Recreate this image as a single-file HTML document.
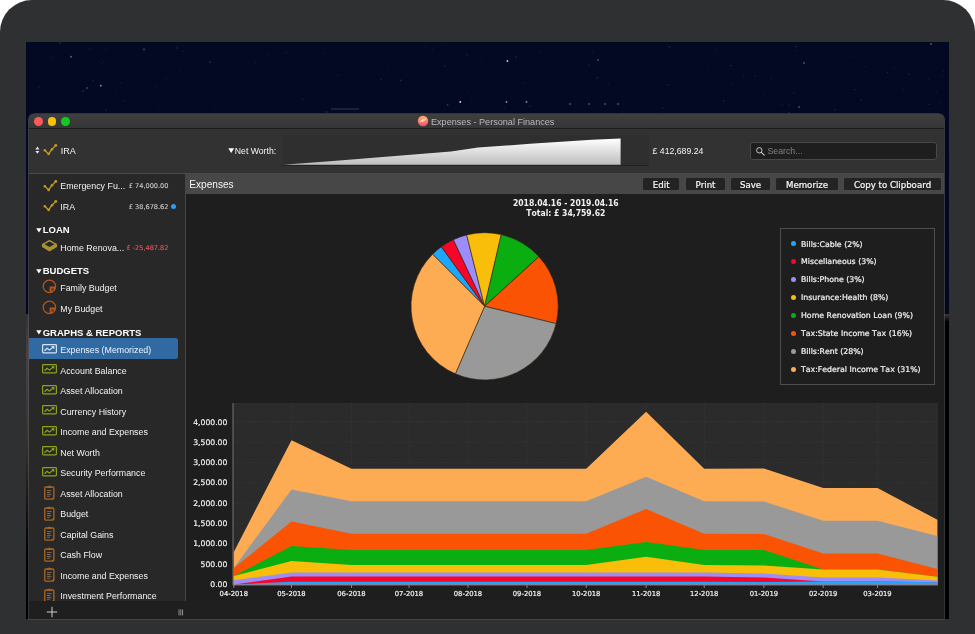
<!DOCTYPE html>
<html><head><meta charset="utf-8"><title>Expenses - Personal Finances</title>
<style>
html,body{margin:0;padding:0;background:#fff;}
body{width:975px;height:634px;position:relative;overflow:hidden;font-family:"Liberation Sans",sans-serif;}
.abs,.ic,.row,.amt,.dot,.tri,.head,.selbg,.ldot,.ltxt,.yl,.xl,.btn{position:absolute;}
#bezel{left:0;top:0;width:975px;height:660px;background:#2f3032;border-radius:32px 32px 0 0;}
#screen{left:26px;top:42px;width:923px;height:577px;background:#000;overflow:hidden;}
#wall{left:0;top:0;width:923px;height:272px;background:linear-gradient(#040923,#03071f);}
#wallL{left:0;top:272px;width:4px;height:305px;background:linear-gradient(#34313a 0,#4a4044 40px,#3a2e30 130px,#0a0808 220px,#000 260px);}
#wallR{left:918px;top:272px;width:5px;height:305px;background:linear-gradient(#3c3840 0,#000 8px);}
#win{left:29px;top:113.6px;width:915.4px;height:505px;background:#1e1e1e;border-radius:5px 5px 0 0;overflow:hidden;box-shadow:0 0 0 0.6px #5a5a5a;}
#title{left:0;top:0;width:100%;height:14.6px;background:linear-gradient(#3f3f3f,#363636);border-bottom:0.8px solid #1c1c1c;}
#tbar{left:0;top:15.2px;width:100%;height:44.6px;background:#323232;border-bottom:0.8px solid #4a4a4a;}
.tl{position:absolute;top:3.3px;width:8.8px;height:8.8px;border-radius:50%;}
#ttxt{left:431px;top:116.8px;font-size:9.1px;color:#b9b9b9;white-space:nowrap;line-height:11px;}
#side{left:29px;top:174px;width:156.4px;height:427px;background:#282828;border-right:0.8px solid #454545;}
#sfoot{left:29px;top:601px;width:915.4px;height:17.7px;background:#1f1f1f;}
.row{left:60.3px;font-size:8.85px;line-height:14px;color:#f2f2f2;white-space:nowrap;}
.row.sel{color:#eaf3ff;}
.amt{right:806.6px;font-family:"DejaVu Sans",sans-serif;font-kerning:none;font-size:6.55px;line-height:13px;white-space:nowrap;}
.dot{left:171px;width:5.2px;height:5.2px;border-radius:50%;background:#2e9bf2;}
.tri{left:36px;width:0;height:0;border-left:2.5px solid transparent;border-right:2.5px solid transparent;border-top:4.6px solid #fff;}
.head{left:42.7px;font-size:9.5px;font-weight:bold;line-height:14px;color:#fff;white-space:nowrap;}
.selbg{left:29px;top:338.2px;width:148.8px;height:20.5px;background:#316aa3;border-radius:0 2.5px 2.5px 0;}
#hbar{left:186.2px;top:174px;width:758.2px;height:20px;background:#474747;}
#hname{left:189.2px;top:178px;font-size:10.15px;line-height:14px;color:#f4f4f4;}
.btn{-webkit-text-stroke:0.22px #f5f5f5;top:177.7px;height:12.4px;background:#232323;border-radius:1.5px;color:#f5f5f5;font-family:"DejaVu Sans",sans-serif;font-kerning:none;font-size:8.6px;line-height:14.6px;text-align:center;white-space:nowrap;}
.ptitle{position:absolute;left:465.8px;width:200px;text-align:center;font-family:"DejaVu Sans Condensed","DejaVu Sans",sans-serif;font-kerning:none;font-weight:bold;font-size:8.55px;line-height:10px;color:#f0f0f0;white-space:nowrap;}
#legend{left:779.6px;top:228.2px;width:153.4px;height:154.4px;border:0.8px solid #4e4e4e;}
.ldot{left:790.8px;width:5.2px;height:5.2px;border-radius:50%;}
.ltxt{-webkit-text-stroke:0.22px #f0f0f0;left:801px;font-family:"DejaVu Sans",sans-serif;font-kerning:none;font-size:7.8px;line-height:12px;color:#f0f0f0;white-space:nowrap;}
#plot{left:233px;top:403px;width:705px;height:182px;background:#2b2b2b;}
.yl{-webkit-text-stroke:0.2px #f0f0f0;left:178.4px;width:49px;text-align:right;font-family:"DejaVu Sans",sans-serif;font-kerning:none;font-size:7.7px;line-height:11px;color:#f0f0f0;white-space:nowrap;}
.xl{-webkit-text-stroke:0.2px #f0f0f0;top:588.9px;width:50px;text-align:center;font-family:"DejaVu Sans",sans-serif;font-kerning:none;font-size:6.8px;line-height:11px;color:#f0f0f0;white-space:nowrap;}
#nw{left:227px;top:146px;font-size:8.7px;line-height:11px;color:#f4f4f4;white-space:nowrap;}
#nwbox{left:283px;top:135.4px;width:366px;height:29.4px;background:#2f2f2f;border-bottom:0.9px solid #222;}
#nwamt{left:652.6px;top:145.9px;font-size:8.7px;line-height:11px;color:#f4f4f4;white-space:nowrap;}
#search{left:749.8px;top:141.8px;width:187px;height:18.4px;background:#1e1e1e;border:0.8px solid #484848;border-radius:3px;box-sizing:border-box;}
#stxt{left:767.4px;top:146px;font-size:8.8px;line-height:11px;color:#808080;}
#ira{left:60.8px;top:144.8px;font-size:9px;line-height:12px;color:#f4f4f4;}
</style></head><body><div id="root" style="position:absolute;left:0;top:0;width:975px;height:634px;will-change:transform">
<div id="bezel" class="abs"></div>
<div id="screen" class="abs"><div id="wall" class="abs"></div><div id="wallL" class="abs"></div><div id="wallR" class="abs"></div></div>
<svg class="abs" style="left:0;top:0" width="975" height="634" viewBox="0 0 975 634">
<circle cx="324.9" cy="52.9" r="0.5" fill="#aab4d8" opacity="0.22"/>
<circle cx="92.9" cy="80.6" r="1.0" fill="#aab4d8" opacity="0.1"/>
<circle cx="79.5" cy="78.5" r="0.5" fill="#aab4d8" opacity="0.06"/>
<circle cx="426.3" cy="47.0" r="1.0" fill="#aab4d8" opacity="0.06"/>
<circle cx="417.8" cy="101.5" r="0.6" fill="#aab4d8" opacity="0.06"/>
<circle cx="608.1" cy="84.0" r="1.0" fill="#aab4d8" opacity="0.06"/>
<circle cx="566.5" cy="45.6" r="0.5" fill="#aab4d8" opacity="0.08"/>
<circle cx="539.8" cy="51.6" r="0.6" fill="#aab4d8" opacity="0.12"/>
<circle cx="525.1" cy="83.1" r="0.6" fill="#aab4d8" opacity="0.16"/>
<circle cx="121.1" cy="83.1" r="0.7" fill="#aab4d8" opacity="0.08"/>
<circle cx="115.9" cy="93.3" r="0.5" fill="#aab4d8" opacity="0.16"/>
<circle cx="597.3" cy="77.7" r="0.8" fill="#aab4d8" opacity="0.16"/>
<circle cx="743.4" cy="75.5" r="0.7" fill="#aab4d8" opacity="0.12"/>
<circle cx="302.7" cy="99.2" r="0.6" fill="#aab4d8" opacity="0.22"/>
<circle cx="101.6" cy="63.6" r="0.7" fill="#aab4d8" opacity="0.12"/>
<circle cx="699.3" cy="62.7" r="0.5" fill="#aab4d8" opacity="0.06"/>
<circle cx="498.5" cy="53.9" r="0.6" fill="#aab4d8" opacity="0.1"/>
<circle cx="887.4" cy="72.4" r="0.5" fill="#aab4d8" opacity="0.22"/>
<circle cx="731.7" cy="83.3" r="0.7" fill="#aab4d8" opacity="0.1"/>
<circle cx="667.8" cy="84.8" r="0.8" fill="#aab4d8" opacity="0.16"/>
<circle cx="89.5" cy="48.7" r="0.8" fill="#aab4d8" opacity="0.1"/>
<circle cx="669.4" cy="46.7" r="0.7" fill="#aab4d8" opacity="0.22"/>
<circle cx="623.3" cy="113.5" r="0.7" fill="#aab4d8" opacity="0.12"/>
<circle cx="687.4" cy="105.9" r="0.5" fill="#aab4d8" opacity="0.1"/>
<circle cx="894.2" cy="67.6" r="0.5" fill="#aab4d8" opacity="0.16"/>
<circle cx="481.7" cy="57.7" r="0.6" fill="#aab4d8" opacity="0.1"/>
<circle cx="707.5" cy="70.6" r="0.5" fill="#aab4d8" opacity="0.12"/>
<circle cx="179.6" cy="70.9" r="0.6" fill="#aab4d8" opacity="0.1"/>
<circle cx="782.2" cy="104.2" r="0.8" fill="#aab4d8" opacity="0.1"/>
<circle cx="936.5" cy="91.2" r="0.6" fill="#aab4d8" opacity="0.12"/>
<circle cx="165.3" cy="54.7" r="0.6" fill="#aab4d8" opacity="0.08"/>
<circle cx="37.1" cy="101.8" r="0.7" fill="#aab4d8" opacity="0.08"/>
<circle cx="286.2" cy="52.5" r="0.7" fill="#aab4d8" opacity="0.16"/>
<circle cx="588.9" cy="64.9" r="1.0" fill="#aab4d8" opacity="0.08"/>
<circle cx="903.1" cy="89.2" r="0.5" fill="#aab4d8" opacity="0.22"/>
<circle cx="447.5" cy="104.7" r="1.0" fill="#aab4d8" opacity="0.22"/>
<circle cx="388.2" cy="70.7" r="0.8" fill="#aab4d8" opacity="0.06"/>
<circle cx="611.4" cy="46.5" r="0.6" fill="#aab4d8" opacity="0.06"/>
<circle cx="432.7" cy="49.9" r="0.5" fill="#aab4d8" opacity="0.16"/>
<circle cx="120.5" cy="82.8" r="0.5" fill="#aab4d8" opacity="0.16"/>
<circle cx="901.9" cy="86.2" r="0.6" fill="#aab4d8" opacity="0.06"/>
<circle cx="592.8" cy="52.7" r="0.7" fill="#aab4d8" opacity="0.1"/>
<circle cx="581.9" cy="76.1" r="0.8" fill="#aab4d8" opacity="0.06"/>
<circle cx="942.6" cy="75.6" r="0.7" fill="#aab4d8" opacity="0.12"/>
<circle cx="105.3" cy="49.4" r="0.7" fill="#aab4d8" opacity="0.1"/>
<circle cx="467.8" cy="91.8" r="0.5" fill="#aab4d8" opacity="0.16"/>
<circle cx="215.4" cy="110.5" r="0.6" fill="#aab4d8" opacity="0.1"/>
<circle cx="662.9" cy="107.8" r="0.7" fill="#aab4d8" opacity="0.16"/>
<circle cx="929.2" cy="104.2" r="0.7" fill="#aab4d8" opacity="0.22"/>
<circle cx="504.5" cy="107.4" r="0.6" fill="#aab4d8" opacity="0.1"/>
<circle cx="517.6" cy="98.1" r="0.6" fill="#aab4d8" opacity="0.1"/>
<circle cx="592.0" cy="98.8" r="0.6" fill="#aab4d8" opacity="0.08"/>
<circle cx="781.3" cy="95.3" r="0.6" fill="#aab4d8" opacity="0.08"/>
<circle cx="503.8" cy="67.6" r="0.5" fill="#aab4d8" opacity="0.06"/>
<circle cx="755.3" cy="76.0" r="1.0" fill="#aab4d8" opacity="0.08"/>
<circle cx="908.9" cy="74.2" r="0.7" fill="#aab4d8" opacity="0.22"/>
<circle cx="907.5" cy="68.3" r="0.5" fill="#aab4d8" opacity="0.08"/>
<circle cx="235.4" cy="56.2" r="0.8" fill="#aab4d8" opacity="0.08"/>
<circle cx="602.0" cy="106.8" r="0.8" fill="#aab4d8" opacity="0.06"/>
<circle cx="865.2" cy="66.8" r="0.5" fill="#aab4d8" opacity="0.22"/>
<circle cx="796.4" cy="50.6" r="0.6" fill="#aab4d8" opacity="0.12"/>
<circle cx="467.2" cy="54.9" r="0.7" fill="#aab4d8" opacity="0.22"/>
<circle cx="106.1" cy="110.1" r="0.8" fill="#aab4d8" opacity="0.22"/>
<circle cx="453.5" cy="95.5" r="0.6" fill="#aab4d8" opacity="0.06"/>
<circle cx="182.9" cy="51.1" r="1.0" fill="#aab4d8" opacity="0.08"/>
<circle cx="861.2" cy="100.1" r="1.0" fill="#aab4d8" opacity="0.08"/>
<circle cx="788.9" cy="112.6" r="0.7" fill="#aab4d8" opacity="0.22"/>
<circle cx="169.9" cy="81.5" r="0.5" fill="#aab4d8" opacity="0.06"/>
<circle cx="763.8" cy="94.3" r="1.0" fill="#aab4d8" opacity="0.06"/>
<circle cx="717.8" cy="52.0" r="0.6" fill="#aab4d8" opacity="0.08"/>
<circle cx="51.8" cy="57.3" r="0.6" fill="#aab4d8" opacity="0.16"/>
<circle cx="730.9" cy="65.5" r="0.8" fill="#aab4d8" opacity="0.16"/>
<circle cx="796.0" cy="46.4" r="0.7" fill="#aab4d8" opacity="0.22"/>
<circle cx="854.6" cy="89.7" r="0.8" fill="#aab4d8" opacity="0.16"/>
<circle cx="789.4" cy="105.2" r="1.0" fill="#aab4d8" opacity="0.08"/>
<circle cx="166.1" cy="78.8" r="0.6" fill="#aab4d8" opacity="0.12"/>
<circle cx="587.7" cy="97.9" r="0.6" fill="#aab4d8" opacity="0.08"/>
<circle cx="156.7" cy="86.6" r="1.0" fill="#aab4d8" opacity="0.06"/>
<circle cx="83.0" cy="91.1" r="1.0" fill="#aab4d8" opacity="0.16"/>
<circle cx="471.3" cy="97.9" r="0.5" fill="#aab4d8" opacity="0.16"/>
<circle cx="255.4" cy="61.9" r="1.0" fill="#aab4d8" opacity="0.06"/>
<circle cx="443.4" cy="44.0" r="0.8" fill="#aab4d8" opacity="0.06"/>
<circle cx="326.5" cy="112.1" r="1.0" fill="#aab4d8" opacity="0.16"/>
<circle cx="210.0" cy="62.0" r="1.0" fill="#aab4d8" opacity="0.16"/>
<circle cx="771.2" cy="78.6" r="1.0" fill="#aab4d8" opacity="0.08"/>
<circle cx="835.0" cy="109.8" r="1.0" fill="#aab4d8" opacity="0.1"/>
<circle cx="850.0" cy="56.6" r="0.6" fill="#aab4d8" opacity="0.12"/>
<circle cx="410.6" cy="70.3" r="0.5" fill="#aab4d8" opacity="0.1"/>
<circle cx="645.5" cy="72.8" r="0.7" fill="#aab4d8" opacity="0.08"/>
<circle cx="749.6" cy="106.6" r="0.7" fill="#aab4d8" opacity="0.08"/>
<circle cx="158.0" cy="105.6" r="0.6" fill="#aab4d8" opacity="0.12"/>
<circle cx="715.2" cy="48.8" r="0.6" fill="#aab4d8" opacity="0.12"/>
<circle cx="939.7" cy="101.9" r="0.8" fill="#aab4d8" opacity="0.08"/>
<circle cx="943.5" cy="71.1" r="0.6" fill="#aab4d8" opacity="0.12"/>
<circle cx="355.2" cy="48.6" r="0.5" fill="#aab4d8" opacity="0.1"/>
<circle cx="338.0" cy="75.0" r="0.5" fill="#aab4d8" opacity="0.22"/>
<circle cx="380.8" cy="79.3" r="1.0" fill="#aab4d8" opacity="0.1"/>
<circle cx="912.8" cy="50.1" r="0.5" fill="#aab4d8" opacity="0.08"/>
<circle cx="103.6" cy="61.6" r="0.7" fill="#aab4d8" opacity="0.08"/>
<circle cx="723.6" cy="101.0" r="0.7" fill="#aab4d8" opacity="0.22"/>
<circle cx="400.7" cy="80.6" r="1.0" fill="#aab4d8" opacity="0.16"/>
<circle cx="482.5" cy="65.5" r="0.5" fill="#aab4d8" opacity="0.1"/>
<circle cx="764.0" cy="55.2" r="0.7" fill="#aab4d8" opacity="0.06"/>
<circle cx="892.1" cy="87.7" r="0.5" fill="#aab4d8" opacity="0.1"/>
<circle cx="587.3" cy="58.0" r="0.5" fill="#aab4d8" opacity="0.1"/>
<circle cx="444.8" cy="66.4" r="0.8" fill="#aab4d8" opacity="0.16"/>
<circle cx="881.3" cy="61.3" r="0.5" fill="#aab4d8" opacity="0.08"/>
<circle cx="512.3" cy="59.2" r="0.6" fill="#aab4d8" opacity="0.06"/>
<circle cx="267.7" cy="55.0" r="0.7" fill="#aab4d8" opacity="0.1"/>
<circle cx="516.2" cy="56.8" r="1.0" fill="#aab4d8" opacity="0.12"/>
<circle cx="646.4" cy="61.5" r="0.7" fill="#aab4d8" opacity="0.06"/>
<circle cx="60.1" cy="43.3" r="1.0" fill="#aab4d8" opacity="0.16"/>
<circle cx="928.7" cy="79.0" r="0.8" fill="#aab4d8" opacity="0.08"/>
<circle cx="124.1" cy="101.0" r="0.8" fill="#aab4d8" opacity="0.12"/>
<circle cx="529.9" cy="106.0" r="0.7" fill="#aab4d8" opacity="0.16"/>
<circle cx="660.8" cy="112.7" r="0.6" fill="#aab4d8" opacity="0.1"/>
<circle cx="794.2" cy="92.9" r="0.6" fill="#aab4d8" opacity="0.22"/>
<circle cx="399.5" cy="67.0" r="0.6" fill="#aab4d8" opacity="0.06"/>
<circle cx="39.2" cy="87.0" r="0.8" fill="#aab4d8" opacity="0.1"/>
<circle cx="176.7" cy="48.1" r="1.0" fill="#aab4d8" opacity="0.12"/>
<circle cx="507.4" cy="61" r="0.9" fill="#ffffff" opacity="0.8"/>
<circle cx="71" cy="56.7" r="0.9" fill="#ffffff" opacity="0.4"/>
<circle cx="100.8" cy="85.7" r="0.9" fill="#ffffff" opacity="0.55"/>
<circle cx="460.3" cy="101.9" r="0.9" fill="#ffffff" opacity="0.9"/>
<circle cx="506.5" cy="101.9" r="0.9" fill="#ffffff" opacity="0.6"/>
<circle cx="526.5" cy="101.9" r="0.9" fill="#ffffff" opacity="0.55"/>
<circle cx="570" cy="104" r="0.9" fill="#ffffff" opacity="0.3"/>
<circle cx="589" cy="104" r="0.9" fill="#ffffff" opacity="0.3"/>
<circle cx="605" cy="104" r="0.9" fill="#ffffff" opacity="0.3"/>
<circle cx="618" cy="104" r="0.9" fill="#ffffff" opacity="0.3"/>
<circle cx="598" cy="60" r="0.9" fill="#ffffff" opacity="0.3"/>
<circle cx="931" cy="44" r="0.9" fill="#ffffff" opacity="0.35"/>
<circle cx="804" cy="63" r="0.9" fill="#ffffff" opacity="0.3"/>
<circle cx="799" cy="107" r="0.9" fill="#ffffff" opacity="0.3"/>
<circle cx="144" cy="49.5" r="0.9" fill="#ffffff" opacity="0.25"/>
<circle cx="87" cy="88" r="0.9" fill="#ffffff" opacity="0.25"/>
<rect x="331" y="108.6" width="28" height="0.8" fill="#8890b0" opacity="0.45"/>
</svg>
<div id="win" class="abs">
 <div id="title" class="abs">
  <div class="tl" style="left:4.9px;background:#fc5a57"></div>
  <div class="tl" style="left:18.6px;background:#f8c00e"></div>
  <div class="tl" style="left:32.35px;background:#13c820"></div>
 </div>
 <div id="tbar" class="abs"></div>
</div>
<svg class="abs" style="left:417px;top:115.4px" width="12" height="12" viewBox="0 0 12 12"><defs><linearGradient id="lg" x1="0" y1="0" x2="0" y2="1"><stop offset="0" stop-color="#ffb070"/><stop offset="1" stop-color="#f2506a"/></linearGradient></defs><circle cx="6" cy="6" r="5.2" fill="url(#lg)"/><path d="M2.6,7.2 C4,4.6 6.4,3.6 9.4,3.6 C8.6,5.6 6.6,7.4 2.6,7.2z" fill="#ffe2c6" opacity="0.85"/></svg>
<div id="ttxt" class="abs">Expenses - Personal Finances</div>

<svg class="abs" style="left:34px;top:145px" width="8" height="11" viewBox="0 0 8 11"><path d="M3.4,1.6 L5.4,4.4 H1.4z M3.4,8.8 L5.4,6 H1.4z" fill="#e8e8e8"/></svg>
<svg class="ic" style="left:42.6px;top:143.4px" width="16" height="14" viewBox="0 0 16 14"><polyline points="1.8,7.2 5.6,11 9,6.2 12.8,2.4" fill="none" stroke="#bf9c1e" stroke-width="1.3" stroke-linejoin="round" stroke-linecap="round"/><circle cx="1.8" cy="7.2" r="1.25" fill="#bf9c1e"/><circle cx="5.6" cy="11" r="1.25" fill="#bf9c1e"/><circle cx="9" cy="6.2" r="1.25" fill="#bf9c1e"/><circle cx="12.8" cy="2.4" r="1.45" fill="#bf9c1e"/></svg>
<div id="ira" class="abs">IRA</div>
<svg class="ic" style="left:227.6px;top:148.3px" width="7" height="6" viewBox="0 0 7 6"><path d="M0.3,0.3 H6.1 L3.2,4.9z" fill="#fff"/></svg>
<div id="nw" class="abs" style="left:234.8px">Net Worth:</div>
<div id="nwbox" class="abs"></div>
<svg class="abs" style="left:0;top:0" width="975" height="634" viewBox="0 0 975 634"><defs><linearGradient id="ng" x1="0" y1="0" x2="0" y2="1"><stop offset="0" stop-color="#ffffff"/><stop offset="1" stop-color="#bdbdbd"/></linearGradient></defs>
<polygon points="283,164.8 330,161.2 451,151.6 478,147.6 530,143.8 592,139.8 620.6,138.6 620.6,164.8" fill="url(#ng)"/></svg>
<div id="nwamt" class="abs">£ 412,689.24</div>
<div id="search" class="abs"></div>
<svg class="abs" style="left:754.6px;top:145.6px" width="11" height="11" viewBox="0 0 11 11"><circle cx="4.3" cy="4.3" r="2.7" fill="none" stroke="#cdcdcd" stroke-width="0.95"/><path d="M6.3,6.3 L9.2,9.2" stroke="#cdcdcd" stroke-width="1.05" stroke-linecap="round"/></svg>
<div id="stxt" class="abs">Search...</div>

<div id="side" class="abs"></div>
<svg class="ic" style="left:42.5px;top:178.5px" width="16" height="14" viewBox="0 0 16 14"><polyline points="1.8,7.2 5.6,11 9,6.2 12.8,2.4" fill="none" stroke="#bf9c1e" stroke-width="1.3" stroke-linejoin="round" stroke-linecap="round"/><circle cx="1.8" cy="7.2" r="1.25" fill="#bf9c1e"/><circle cx="5.6" cy="11" r="1.25" fill="#bf9c1e"/><circle cx="9" cy="6.2" r="1.25" fill="#bf9c1e"/><circle cx="12.8" cy="2.4" r="1.45" fill="#bf9c1e"/></svg>
<div class="row" style="top:179px">Emergency Fu...</div>
<div class="amt" style="top:180.4px;color:#c2c2c2;-webkit-text-stroke:0.15px #c2c2c2">£ 74,000.00</div>
<svg class="ic" style="left:42.5px;top:199px" width="16" height="14" viewBox="0 0 16 14"><polyline points="1.8,7.2 5.6,11 9,6.2 12.8,2.4" fill="none" stroke="#bf9c1e" stroke-width="1.3" stroke-linejoin="round" stroke-linecap="round"/><circle cx="1.8" cy="7.2" r="1.25" fill="#bf9c1e"/><circle cx="5.6" cy="11" r="1.25" fill="#bf9c1e"/><circle cx="9" cy="6.2" r="1.25" fill="#bf9c1e"/><circle cx="12.8" cy="2.4" r="1.45" fill="#bf9c1e"/></svg>
<div class="row" style="top:199.9px">IRA</div>
<div class="amt" style="top:201.3px;color:#c2c2c2;-webkit-text-stroke:0.15px #c2c2c2">£ 38,678.62</div>
<div class="dot" style="top:203.8px"></div>
<svg class="ic" style="left:35.6px;top:227.6px" width="6" height="5" viewBox="0 0 6 5"><path d="M0.2,0.2 H5.6 L2.9,4.5z" fill="#fff"/></svg><div class="head" style="top:223px">LOAN</div>
<svg class="ic" style="left:41px;top:239px" width="17" height="14" viewBox="0 0 17 14"><path d="M8.5,0.8 L16,5 L16,8 L8.5,12.6 L1,8 L1,5 Z" fill="#a89132"/><path d="M8.5,2.6 L13.4,5.2 L8.5,8 L3.6,5.2 Z" fill="#282828"/></svg>
<div class="row" style="top:240.5px">Home Renova...</div>
<div class="amt" style="top:241.9px;color:#e0545f;-webkit-text-stroke:0.15px #e0545f">£ -25,487.82</div>
<svg class="ic" style="left:35.6px;top:268.6px" width="6" height="5" viewBox="0 0 6 5"><path d="M0.2,0.2 H5.6 L2.9,4.5z" fill="#fff"/></svg><div class="head" style="top:264px">BUDGETS</div>
<svg class="ic" style="left:42.2px;top:279.1px" width="15" height="15" viewBox="0 0 15 15"><circle cx="7.4" cy="7.4" r="6.2" fill="none" stroke="#b5551d" stroke-width="1.25"/><path d="M7.6,7.6 H13.4 A6.2,6.2 0 0 1 7.6,13.6 Z" fill="#b5551d"/><path d="M9.3,9.3 h2.4 v2.4 h-2.4z" fill="#282828" opacity="0.6"/></svg>
<div class="row" style="top:281.2px">Family Budget</div>
<svg class="ic" style="left:42.2px;top:299.9px" width="15" height="15" viewBox="0 0 15 15"><circle cx="7.4" cy="7.4" r="6.2" fill="none" stroke="#b5551d" stroke-width="1.25"/><path d="M7.6,7.6 H13.4 A6.2,6.2 0 0 1 7.6,13.6 Z" fill="#b5551d"/><path d="M9.3,9.3 h2.4 v2.4 h-2.4z" fill="#282828" opacity="0.6"/></svg>
<div class="row" style="top:302px">My Budget</div>
<svg class="ic" style="left:35.6px;top:330.1px" width="6" height="5" viewBox="0 0 6 5"><path d="M0.2,0.2 H5.6 L2.9,4.5z" fill="#fff"/></svg><div class="head" style="top:325.5px">GRAPHS &amp; REPORTS</div>
<div class="selbg"></div>
<svg class="ic" style="left:41.9px;top:343.7px" width="16" height="11" viewBox="0 0 16 11"><rect x="0.6" y="0.6" width="13.8" height="8.3" rx="0.8" fill="none" stroke="#d2e4fb" stroke-width="1.2"/><polyline points="2.5,6.7 5.1,4.2 7.5,6.1 11.4,2.8" fill="none" stroke="#d2e4fb" stroke-width="1.2" stroke-linejoin="round"/><path d="M9.2,2.2 L12.5,1.9 L12.2,5.2 Z" fill="#d2e4fb"/></svg>
<div class="row sel" style="top:343.3px">Expenses (Memorized)</div>
<svg class="ic" style="left:41.9px;top:364.3px" width="16" height="11" viewBox="0 0 16 11"><rect x="0.6" y="0.6" width="13.8" height="8.3" rx="0.8" fill="none" stroke="#8ba31a" stroke-width="1.2"/><polyline points="2.5,6.7 5.1,4.2 7.5,6.1 11.4,2.8" fill="none" stroke="#8ba31a" stroke-width="1.2" stroke-linejoin="round"/><path d="M9.2,2.2 L12.5,1.9 L12.2,5.2 Z" fill="#8ba31a"/></svg>
<div class="row" style="top:363.6px">Account Balance</div>
<svg class="ic" style="left:41.9px;top:384.8px" width="16" height="11" viewBox="0 0 16 11"><rect x="0.6" y="0.6" width="13.8" height="8.3" rx="0.8" fill="none" stroke="#8ba31a" stroke-width="1.2"/><polyline points="2.5,6.7 5.1,4.2 7.5,6.1 11.4,2.8" fill="none" stroke="#8ba31a" stroke-width="1.2" stroke-linejoin="round"/><path d="M9.2,2.2 L12.5,1.9 L12.2,5.2 Z" fill="#8ba31a"/></svg>
<div class="row" style="top:384.1px">Asset Allocation</div>
<svg class="ic" style="left:41.9px;top:405.3px" width="16" height="11" viewBox="0 0 16 11"><rect x="0.6" y="0.6" width="13.8" height="8.3" rx="0.8" fill="none" stroke="#8ba31a" stroke-width="1.2"/><polyline points="2.5,6.7 5.1,4.2 7.5,6.1 11.4,2.8" fill="none" stroke="#8ba31a" stroke-width="1.2" stroke-linejoin="round"/><path d="M9.2,2.2 L12.5,1.9 L12.2,5.2 Z" fill="#8ba31a"/></svg>
<div class="row" style="top:404.6px">Currency History</div>
<svg class="ic" style="left:41.9px;top:425.8px" width="16" height="11" viewBox="0 0 16 11"><rect x="0.6" y="0.6" width="13.8" height="8.3" rx="0.8" fill="none" stroke="#8ba31a" stroke-width="1.2"/><polyline points="2.5,6.7 5.1,4.2 7.5,6.1 11.4,2.8" fill="none" stroke="#8ba31a" stroke-width="1.2" stroke-linejoin="round"/><path d="M9.2,2.2 L12.5,1.9 L12.2,5.2 Z" fill="#8ba31a"/></svg>
<div class="row" style="top:425.1px">Income and Expenses</div>
<svg class="ic" style="left:41.9px;top:446.3px" width="16" height="11" viewBox="0 0 16 11"><rect x="0.6" y="0.6" width="13.8" height="8.3" rx="0.8" fill="none" stroke="#8ba31a" stroke-width="1.2"/><polyline points="2.5,6.7 5.1,4.2 7.5,6.1 11.4,2.8" fill="none" stroke="#8ba31a" stroke-width="1.2" stroke-linejoin="round"/><path d="M9.2,2.2 L12.5,1.9 L12.2,5.2 Z" fill="#8ba31a"/></svg>
<div class="row" style="top:445.6px">Net Worth</div>
<svg class="ic" style="left:41.9px;top:466.9px" width="16" height="11" viewBox="0 0 16 11"><rect x="0.6" y="0.6" width="13.8" height="8.3" rx="0.8" fill="none" stroke="#8ba31a" stroke-width="1.2"/><polyline points="2.5,6.7 5.1,4.2 7.5,6.1 11.4,2.8" fill="none" stroke="#8ba31a" stroke-width="1.2" stroke-linejoin="round"/><path d="M9.2,2.2 L12.5,1.9 L12.2,5.2 Z" fill="#8ba31a"/></svg>
<div class="row" style="top:466.2px">Security Performance</div>
<svg class="ic" style="left:43.9px;top:485.2px" width="11" height="15" viewBox="0 0 11 15"><rect x="0.75" y="2" width="9.1" height="12.1" rx="1.1" fill="none" stroke="#a8631f" stroke-width="1.35"/><path d="M3,2.9 V1.5 h1.3 l0.6,-1 h1 l0.6,1 h1.3 v1.4z" fill="#a8631f"/><path d="M3,5.6 h4.6 M3,7.5 h3.4 M3,9.4 h4.4 M3,11.2 h3" stroke="#8c7457" stroke-width="0.85"/><path d="M7.4,14 L9.9,11.5 V14z" fill="#a8631f"/></svg>
<div class="row" style="top:486.7px">Asset Allocation</div>
<svg class="ic" style="left:43.9px;top:505.70000000000005px" width="11" height="15" viewBox="0 0 11 15"><rect x="0.75" y="2" width="9.1" height="12.1" rx="1.1" fill="none" stroke="#a8631f" stroke-width="1.35"/><path d="M3,2.9 V1.5 h1.3 l0.6,-1 h1 l0.6,1 h1.3 v1.4z" fill="#a8631f"/><path d="M3,5.6 h4.6 M3,7.5 h3.4 M3,9.4 h4.4 M3,11.2 h3" stroke="#8c7457" stroke-width="0.85"/><path d="M7.4,14 L9.9,11.5 V14z" fill="#a8631f"/></svg>
<div class="row" style="top:507.20000000000005px">Budget</div>
<svg class="ic" style="left:43.9px;top:526.2px" width="11" height="15" viewBox="0 0 11 15"><rect x="0.75" y="2" width="9.1" height="12.1" rx="1.1" fill="none" stroke="#a8631f" stroke-width="1.35"/><path d="M3,2.9 V1.5 h1.3 l0.6,-1 h1 l0.6,1 h1.3 v1.4z" fill="#a8631f"/><path d="M3,5.6 h4.6 M3,7.5 h3.4 M3,9.4 h4.4 M3,11.2 h3" stroke="#8c7457" stroke-width="0.85"/><path d="M7.4,14 L9.9,11.5 V14z" fill="#a8631f"/></svg>
<div class="row" style="top:527.7px">Capital Gains</div>
<svg class="ic" style="left:43.9px;top:546.7px" width="11" height="15" viewBox="0 0 11 15"><rect x="0.75" y="2" width="9.1" height="12.1" rx="1.1" fill="none" stroke="#a8631f" stroke-width="1.35"/><path d="M3,2.9 V1.5 h1.3 l0.6,-1 h1 l0.6,1 h1.3 v1.4z" fill="#a8631f"/><path d="M3,5.6 h4.6 M3,7.5 h3.4 M3,9.4 h4.4 M3,11.2 h3" stroke="#8c7457" stroke-width="0.85"/><path d="M7.4,14 L9.9,11.5 V14z" fill="#a8631f"/></svg>
<div class="row" style="top:548.2px">Cash Flow</div>
<svg class="ic" style="left:43.9px;top:567.2px" width="11" height="15" viewBox="0 0 11 15"><rect x="0.75" y="2" width="9.1" height="12.1" rx="1.1" fill="none" stroke="#a8631f" stroke-width="1.35"/><path d="M3,2.9 V1.5 h1.3 l0.6,-1 h1 l0.6,1 h1.3 v1.4z" fill="#a8631f"/><path d="M3,5.6 h4.6 M3,7.5 h3.4 M3,9.4 h4.4 M3,11.2 h3" stroke="#8c7457" stroke-width="0.85"/><path d="M7.4,14 L9.9,11.5 V14z" fill="#a8631f"/></svg>
<div class="row" style="top:568.7px">Income and Expenses</div>
<svg class="ic" style="left:43.9px;top:587.7px" width="11" height="15" viewBox="0 0 11 15"><rect x="0.75" y="2" width="9.1" height="12.1" rx="1.1" fill="none" stroke="#a8631f" stroke-width="1.35"/><path d="M3,2.9 V1.5 h1.3 l0.6,-1 h1 l0.6,1 h1.3 v1.4z" fill="#a8631f"/><path d="M3,5.6 h4.6 M3,7.5 h3.4 M3,9.4 h4.4 M3,11.2 h3" stroke="#8c7457" stroke-width="0.85"/><path d="M7.4,14 L9.9,11.5 V14z" fill="#a8631f"/></svg>
<div class="row" style="top:589.2px">Investment Performance</div>
<div id="sfoot" class="abs"></div>
<svg class="abs" style="left:45.8px;top:606px" width="12" height="12" viewBox="0 0 12 12"><path d="M6,0.8 V11.2 M0.8,6 H11.2" stroke="#e0e0e0" stroke-width="0.9"/></svg>
<svg class="abs" style="left:177.8px;top:608.6px" width="7" height="7" viewBox="0 0 7 7"><path d="M1,0.4 V6.4 M2.8,0.4 V6.4 M4.6,0.4 V6.4" stroke="#9a9a9a" stroke-width="0.9"/></svg>

<div id="hbar" class="abs"></div>
<div id="hname" class="abs">Expenses</div>
<div class="btn" style="left:643.1px;width:36.2px">Edit</div>
<div class="btn" style="left:685.8px;width:39.4px">Print</div>
<div class="btn" style="left:731.1px;width:39px">Save</div>
<div class="btn" style="left:776.4px;width:61.4px">Memorize</div>
<div class="btn" style="left:844px;width:97.2px">Copy to Clipboard</div>

<div class="ptitle" style="top:198.2px">2018.04.16 - 2019.04.16</div>
<div class="ptitle" style="top:208px">Total: £ 34,759.62</div>
<svg class="abs" style="left:0;top:0" width="975" height="634" viewBox="0 0 975 634">
<path d="M484.6,306.3 L432.56,254.26 A73.6,73.6 0 0 1 441.34,246.76 Z" fill="#1ea7fa" stroke="#33230f" stroke-width="0.6" stroke-linejoin="round"/>
<path d="M484.6,306.3 L441.34,246.76 A73.6,73.6 0 0 1 453.38,239.65 Z" fill="#f8062a" stroke="#33230f" stroke-width="0.6" stroke-linejoin="round"/>
<path d="M484.6,306.3 L453.38,239.65 A73.6,73.6 0 0 1 466.67,234.92 Z" fill="#9d8dfa" stroke="#33230f" stroke-width="0.6" stroke-linejoin="round"/>
<path d="M484.6,306.3 L466.67,234.92 A73.6,73.6 0 0 1 501.28,234.62 Z" fill="#f9be09" stroke="#33230f" stroke-width="0.6" stroke-linejoin="round"/>
<path d="M484.6,306.3 L501.28,234.62 A73.6,73.6 0 0 1 538.95,256.67 Z" fill="#0bae11" stroke="#33230f" stroke-width="0.6" stroke-linejoin="round"/>
<path d="M484.6,306.3 L538.95,256.67 A73.6,73.6 0 0 1 556.14,323.61 Z" fill="#fb5304" stroke="#33230f" stroke-width="0.6" stroke-linejoin="round"/>
<path d="M484.6,306.3 L556.14,323.61 A73.6,73.6 0 0 1 455.37,373.85 Z" fill="#999999" stroke="#33230f" stroke-width="0.6" stroke-linejoin="round"/>
<path d="M484.6,306.3 L455.37,373.85 A73.6,73.6 0 0 1 432.56,254.26 Z" fill="#feac54" stroke="#33230f" stroke-width="0.6" stroke-linejoin="round"/>
</svg>
<div id="legend" class="abs"></div>
<div class="ldot" style="top:241.3px;background:#1ea7fa"></div><div class="ltxt" style="top:238.5px">Bills:Cable (2%)</div>
<div class="ldot" style="top:259.2px;background:#f8062a"></div><div class="ltxt" style="top:256.4px">Miscellaneous (3%)</div>
<div class="ldot" style="top:277.1px;background:#9d8dfa"></div><div class="ltxt" style="top:274.3px">Bills:Phone (3%)</div>
<div class="ldot" style="top:295.0px;background:#f9be09"></div><div class="ltxt" style="top:292.2px">Insurance:Health (8%)</div>
<div class="ldot" style="top:312.9px;background:#0bae11"></div><div class="ltxt" style="top:310.1px">Home Renovation Loan (9%)</div>
<div class="ldot" style="top:330.8px;background:#fb5304"></div><div class="ltxt" style="top:328.0px">Tax:State Income Tax (16%)</div>
<div class="ldot" style="top:348.7px;background:#999999"></div><div class="ltxt" style="top:345.9px">Bills:Rent (28%)</div>
<div class="ldot" style="top:366.6px;background:#feac54"></div><div class="ltxt" style="top:363.8px">Tax:Federal Income Tax (31%)</div>

<div id="plot" class="abs"></div>
<svg class="abs" style="left:0;top:0" width="975" height="634" viewBox="0 0 975 634">
<g stroke="#3a3a3a" stroke-width="0.6" stroke-dasharray="1.5,1.5"><line x1="291.5" y1="403" x2="291.5" y2="584" /><line x1="351.5" y1="403" x2="351.5" y2="584" /><line x1="409" y1="403" x2="409" y2="584" /><line x1="468" y1="403" x2="468" y2="584" /><line x1="527" y1="403" x2="527" y2="584" /><line x1="586.2" y1="403" x2="586.2" y2="584" /><line x1="646.1" y1="403" x2="646.1" y2="584" /><line x1="704.2" y1="403" x2="704.2" y2="584" /><line x1="763.9" y1="403" x2="763.9" y2="584" /><line x1="823.2" y1="403" x2="823.2" y2="584" /><line x1="877.5" y1="403" x2="877.5" y2="584" /><line x1="233" y1="564.1" x2="938" y2="564.1" /><line x1="233" y1="543.7" x2="938" y2="543.7" /><line x1="233" y1="523.4" x2="938" y2="523.4" /><line x1="233" y1="503.1" x2="938" y2="503.1" /><line x1="233" y1="482.8" x2="938" y2="482.8" /><line x1="233" y1="462.4" x2="938" y2="462.4" /><line x1="233" y1="442.1" x2="938" y2="442.1" /><line x1="233" y1="421.8" x2="938" y2="421.8" /></g>
<polygon points="233.8,584.4 233.8,551.9 291.5,440.3 351.5,468.7 409.0,468.7 468.0,468.7 527.0,468.7 586.2,468.7 646.1,411.7 704.2,468.7 763.9,468.6 823.2,488.0 877.5,488.0 937.4,519.8 937.4,584.4" fill="#feac54"/>
<polygon points="233.8,584.4 233.8,568.0 291.5,489.5 351.5,501.3 409.0,501.3 468.0,501.3 527.0,501.3 586.2,501.3 646.1,476.7 704.2,501.3 763.9,501.4 823.2,520.8 877.5,520.8 937.4,536.1 937.4,584.4" fill="#999999"/>
<polygon points="233.8,584.4 233.8,568.1 291.5,521.6 351.5,533.8 409.0,533.8 468.0,533.8 527.0,533.8 586.2,533.8 646.1,509.1 704.2,533.8 763.9,533.9 823.2,553.6 877.5,553.6 937.4,568.9 937.4,584.4" fill="#fb5304"/>
<polygon points="233.8,584.4 233.8,576.0 291.5,546.0 351.5,549.9 409.0,549.9 468.0,549.9 527.0,549.9 586.2,549.9 646.1,542.0 704.2,549.9 763.9,550.1 823.2,569.5 877.5,569.5 937.4,576.8 937.4,584.4" fill="#0bae11"/>
<polygon points="233.8,584.4 233.8,576.0 291.5,560.9 351.5,565.0 409.0,565.0 468.0,565.0 527.0,565.0 586.2,565.0 646.1,556.8 704.2,565.0 763.9,565.6 823.2,569.5 877.5,569.5 937.4,576.8 937.4,584.4" fill="#f9be09"/>
<polygon points="233.8,584.4 233.8,580.3 291.5,572.6 351.5,572.6 409.0,572.6 468.0,572.6 527.0,572.6 586.2,572.6 646.1,572.6 704.2,572.6 763.9,573.6 823.2,577.6 877.5,577.6 937.4,580.5 937.4,584.4" fill="#9d8dfa"/>
<polygon points="233.8,584.4 233.8,584.4 291.5,576.6 351.5,576.6 409.0,576.6 468.0,576.6 527.0,576.6 586.2,576.6 646.1,576.6 704.2,576.6 763.9,577.6 823.2,581.4 877.5,581.4 937.4,582.2 937.4,584.4" fill="#f8062a"/>
<polygon points="233.8,584.4 233.8,584.4 291.5,581.8 351.5,581.8 409.0,581.8 468.0,581.8 527.0,581.8 586.2,581.8 646.1,581.8 704.2,581.8 763.9,581.9 823.2,581.4 877.5,581.4 937.4,582.2 937.4,584.4" fill="#1ea7fa"/>
<path d="M233,403 V585 H938" fill="none" stroke="#8a8a8a" stroke-width="0.8"/>
<g stroke="#9a9a9a" stroke-width="0.8"><line x1="233.8" y1="585" x2="233.8" y2="588" /><line x1="291.5" y1="585" x2="291.5" y2="588" /><line x1="351.5" y1="585" x2="351.5" y2="588" /><line x1="409" y1="585" x2="409" y2="588" /><line x1="468" y1="585" x2="468" y2="588" /><line x1="527" y1="585" x2="527" y2="588" /><line x1="586.2" y1="585" x2="586.2" y2="588" /><line x1="646.1" y1="585" x2="646.1" y2="588" /><line x1="704.2" y1="585" x2="704.2" y2="588" /><line x1="763.9" y1="585" x2="763.9" y2="588" /><line x1="823.2" y1="585" x2="823.2" y2="588" /><line x1="877.5" y1="585" x2="877.5" y2="588" /></g>
</svg>
<div class="yl" style="top:579.1px">0.00</div>
<div class="yl" style="top:558.8px">500.00</div>
<div class="yl" style="top:538.4px">1,000.00</div>
<div class="yl" style="top:518.1px">1,500.00</div>
<div class="yl" style="top:497.8px">2,000.00</div>
<div class="yl" style="top:477.4px">2,500.00</div>
<div class="yl" style="top:457.1px">3,000.00</div>
<div class="yl" style="top:436.8px">3,500.00</div>
<div class="yl" style="top:416.5px">4,000.00</div>
<div class="xl" style="left:208.8px">04-2018</div>
<div class="xl" style="left:266.5px">05-2018</div>
<div class="xl" style="left:326.5px">06-2018</div>
<div class="xl" style="left:384.0px">07-2018</div>
<div class="xl" style="left:443.0px">08-2018</div>
<div class="xl" style="left:502.0px">09-2018</div>
<div class="xl" style="left:561.2px">10-2018</div>
<div class="xl" style="left:621.1px">11-2018</div>
<div class="xl" style="left:679.2px">12-2018</div>
<div class="xl" style="left:738.9px">01-2019</div>
<div class="xl" style="left:798.2px">02-2019</div>
<div class="xl" style="left:852.5px">03-2019</div>
</div></body></html>
